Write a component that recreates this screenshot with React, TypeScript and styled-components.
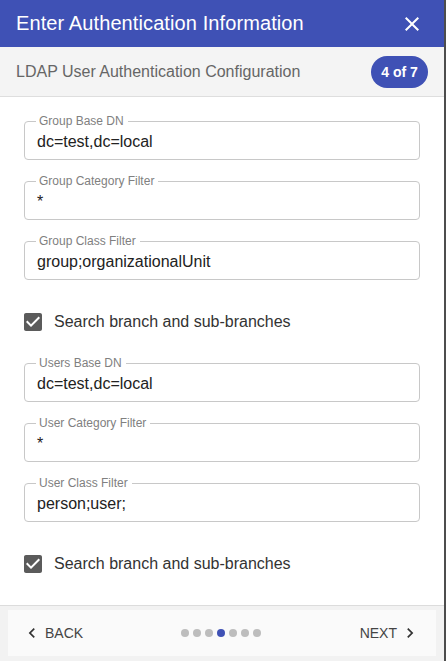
import * as React from 'react';
import styled, { createGlobalStyle } from 'styled-components';

const GlobalStyle = createGlobalStyle`
  html, body {
    margin: 0;
    padding: 0;
    background: #4d4d4d;
    overflow: hidden;
  }
  * { box-sizing: border-box; }
`;

type FieldProps = {
    label: string;
    value: string;
}

const fields1: FieldProps[] = [
    { label: 'Group Base DN', value: 'dc=test,dc=local' },
    { label: 'Group Category Filter', value: '*' },
    { label: 'Group Class Filter', value: 'group;organizationalUnit' },
];

const fields2: FieldProps[] = [
    { label: 'Users Base DN', value: 'dc=test,dc=local' },
    { label: 'User Category Filter', value: '*' },
    { label: 'User Class Filter', value: 'person;user;' },
];

const Field = ({ label, value }: FieldProps) => (
    <Fieldset>
        <Legend>{label}</Legend>
        <Value>{value}</Value>
    </Fieldset>
);

const Check = ({ label }: { label: string }) => (
    <CheckRow>
        <svg width="24" height="24" viewBox="0 0 24 24">
            <path
                fill="#5b5b5b"
                d="M19 3H5c-1.11 0-2 .9-2 2v14c0 1.1.89 2 2 2h14c1.11 0 2-.9 2-2V5c0-1.1-.89-2-2-2z"
            />
            <path fill="#fff" d="M10 17l-5-5 1.41-1.41L10 14.17l7.59-7.59L19 8l-9 9z" />
        </svg>
        <CheckLabel>{label}</CheckLabel>
    </CheckRow>
);

const App = () => {
    const steps = 7;
    const active = 3;

    return (
        <>
            <GlobalStyle />
            <Dialog>
                <Header>
                    <Title>Enter Authentication Information</Title>
                    <CloseButton aria-label="close">
                        <svg width="24" height="24" viewBox="0 0 24 24">
                            <path
                                fill="#fff"
                                d="M19 6.41 17.59 5 12 10.59 6.41 5 5 6.41 10.59 12 5 17.59 6.41 19 12 13.41 17.59 19 19 17.59 13.41 12z"
                            />
                        </svg>
                    </CloseButton>
                </Header>

                <SubHeader>
                    <SubTitle>LDAP User Authentication Configuration</SubTitle>
                    <Badge>4 of 7</Badge>
                </SubHeader>

                <Body>
                    {fields1.map(f => <Field key={f.label} {...f} />)}
                    <Check label="Search branch and sub-branches" />
                    {fields2.map(f => <Field key={f.label} {...f} />)}
                    <Check label="Search branch and sub-branches" />
                </Body>

                <Footer>
                    <Stepper>
                        <NavButton>
                            <svg width="20" height="20" viewBox="0 0 24 24">
                                <path fill="#333" d="M15.41 7.41 14 6l-6 6 6 6 1.41-1.41L10.83 12z" />
                            </svg>
                            BACK
                        </NavButton>
                        <Dots>
                            {Array.from({ length: steps }).map((_, i) =>
                                <Dot key={i} $active={i === active} />
                            )}
                        </Dots>
                        <NavButton $end>
                            NEXT
                            <svg width="20" height="20" viewBox="0 0 24 24">
                                <path fill="#333" d="M10 6 8.59 7.41 13.17 12l-4.58 4.59L10 18l6-6z" />
                            </svg>
                        </NavButton>
                    </Stepper>
                </Footer>
            </Dialog>
        </>
    )
}

export default App

const Dialog = styled.div`
  width: 444px;
  height: 661px;
  background: #fff;
  display: flex;
  flex-direction: column;
  font-family: "Liberation Sans", Arial, sans-serif;
  overflow: hidden;
`;
const Header = styled.div`
  height: 47px;
  flex-shrink: 0;
  background: #3f51b5;
  display: flex;
  align-items: center;
  justify-content: space-between;
  padding: 0 20px 0 16px;
`;
const Title = styled.h2`
  margin: 0;
  font-size: 20px;
  font-weight: 400;
  color: #fff;
  letter-spacing: 0.1px;
`;
const CloseButton = styled.div`
  display: flex;
  width: 24px;
  height: 24px;
`;
const SubHeader = styled.div`
  height: 50px;
  flex-shrink: 0;
  background: #f4f4f4;
  border-bottom: 1px solid #dedede;
  display: flex;
  align-items: center;
  justify-content: space-between;
  padding: 0 16px 0 16px;
`;
const SubTitle = styled.div`
  font-size: 16px;
  color: #666;
`;
const Badge = styled.div`
  width: 57px;
  height: 32px;
  border-radius: 16px;
  background: #3f51b5;
  color: #fff;
  font-size: 14px;
  font-weight: 700;
  display: flex;
  align-items: center;
  justify-content: center;
`;
const Body = styled.div`
  flex: 1;
  display: flex;
  flex-direction: column;
  gap: 14px;
  padding: 17px 24px 0 24px;
`;
const Fieldset = styled.fieldset`
  margin: 0;
  padding: 0 12px;
  height: 46px;
  border: 1px solid #c8c8c8;
  border-radius: 4px;
  min-width: 0;
`;
const Legend = styled.legend`
  padding: 0 4px 0 3px;
  margin-left: -1px;
  font-size: 12px;
  line-height: 14px;
  color: #808080;
`;
const Value = styled.div`
  padding-top: 4px;
  font-size: 16px;
  line-height: 20px;
  color: #222;
`;
const CheckRow = styled.div`
  display: flex;
  align-items: center;
  gap: 9px;
  height: 24px;
  margin: 16px 0 8px -3px;
`;
const CheckLabel = styled.span`
  font-size: 16px;
  color: #333;
`;
const Footer = styled.div`
  flex-shrink: 0;
  height: 56px;
  background: #f2f2f2;
  border-top: 1px solid #dcdcdc;
  padding: 4px 8px 0 8px;
`;
const Stepper = styled.div`
  height: 46px;
  background: #fafafa;
  display: grid;
  grid-template-columns: 1fr auto 1fr;
  align-items: center;
  padding: 0 16px 0 14px;
`;
const NavButton = styled.div<{ $end?: boolean }>`
  display: flex;
  align-items: center;
  justify-self: ${p => p.$end ? 'end' : 'start'};
  gap: 3px;
  font-size: 14px;
  color: #444;
`;
const Dots = styled.div`
  display: flex;
  gap: 4px;
`;
const Dot = styled.span<{ $active: boolean }>`
  width: 8px;
  height: 8px;
  border-radius: 50%;
  background: ${p => p.$active ? '#3f51b5' : '#bdbdbd'};
`;
